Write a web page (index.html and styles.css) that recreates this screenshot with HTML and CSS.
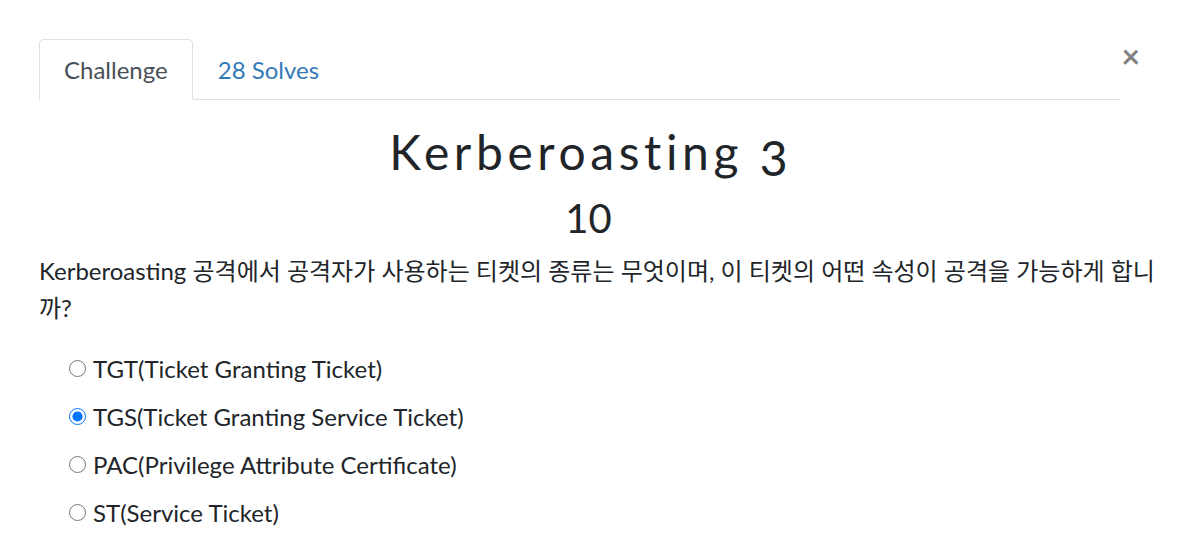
FILE: index.html
```html
<!DOCTYPE html>
<html lang="ko">
<head>
<meta charset="utf-8">
<link rel="stylesheet" href="styles.css">
</head>
<body>
<div class="modal">
  <button class="close" type="button">×</button>
  <ul class="tabs">
    <li class="tab active">Challenge</li>
    <li class="tab link">28 Solves</li>
  </ul>
  <div class="body">
    <h2 class="name">Kerberoasting <span class="num">3</span></h2>
    <h3 class="value">10</h3>
    <p class="desc">Kerberoasting 공격에서 공격자가 사용하는 티켓의 종류는 무엇이며, 이 티켓의 어떤 속성이 공격을 가능하게 합니까?</p>
    <div class="options">
      <label class="opt"><input type="radio" name="a"> TGT(Ticket Granting Ticket)</label>
      <label class="opt"><input type="radio" name="a" checked> TGS(Ticket Granting Service Ticket)</label>
      <label class="opt"><input type="radio" name="a"> PAC(Privilege Attribute Certificate)</label>
      <label class="opt"><input type="radio" name="a"> ST(Service Ticket)</label>
    </div>
  </div>
</div>
</body>
</html>
```

FILE: styles.css
```css
html, body {
  margin: 0;
  padding: 0;
  background: #fff;
}
body {
  font-family: Lato, "Noto Sans CJK KR", sans-serif;
  color: #212529;
  font-size: 24px;
  line-height: 1.5;
}
.modal {
  position: relative;
  width: 1099px;
  padding: 39px 0 0 39px;
}
.close {
  position: absolute;
  top: 40px;
  right: -2px;
  border: 0;
  background: none;
  padding: 0;
  font-family: Lato, sans-serif;
  font-size: 32px;
  font-weight: 700;
  line-height: 1;
  color: #808080;
}
.tabs {
  list-style: none;
  margin: 0;
  padding: 0;
  display: flex;
  width: 1081px;
  border-bottom: 1px solid #dee2e6;
}
.tab {
  padding: 12px 24px 11px 24px;
  line-height: 36px;
  border: 1px solid transparent;
  border-top-left-radius: 5px;
  border-top-right-radius: 5px;
  margin-bottom: -1px;
}
.tab.active {
  color: #495057;
  border-color: #dee2e6 #dee2e6 #fff;
  background: #fff;
}
.tab.link {
  color: #337ab7;
}
.name {
  margin: 23px 0 0;
  text-align: center;
  font-family: Lato, sans-serif;
  font-weight: 400;
  font-size: 48px;
  letter-spacing: 4.6px;
  line-height: 1.2;
}
.num {
  position: relative;
  top: 6px;
  letter-spacing: 0;
}
.value {
  margin: 13px 0 0;
  text-align: center;
  font-weight: 400;
  font-size: 40px;
  line-height: 1.2;
}
.desc {
  margin: 10px -22px 0 0;
  line-height: 37px;
}
.options {
  margin-top: 19px;
  padding-left: 30px;
  display: flex;
  flex-direction: column;
}
.opt {
  display: flex;
  align-items: center;
  height: 48px;
}
.opt input {
  width: 17px;
  height: 17px;
  margin: 0 7px 0 0;
  accent-color: #0075ff;
}
```
